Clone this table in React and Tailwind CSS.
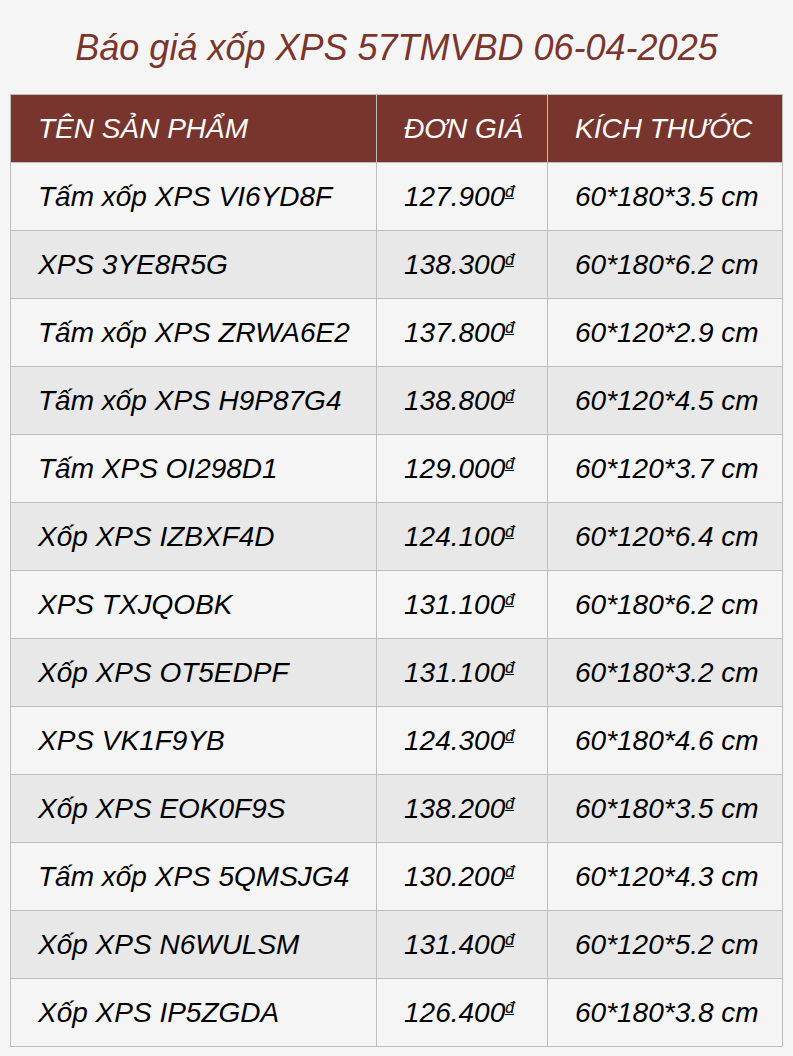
const ROWS = [
  ['Tấm xốp XPS VI6YD8F', '127.900', '60*180*3.5 cm'],
  ['XPS 3YE8R5G', '138.300', '60*180*6.2 cm'],
  ['Tấm xốp XPS ZRWA6E2', '137.800', '60*120*2.9 cm'],
  ['Tấm xốp XPS H9P87G4', '138.800', '60*120*4.5 cm'],
  ['Tấm XPS OI298D1', '129.000', '60*120*3.7 cm'],
  ['Xốp XPS IZBXF4D', '124.100', '60*120*6.4 cm'],
  ['XPS TXJQOBK', '131.100', '60*180*6.2 cm'],
  ['Xốp XPS OT5EDPF', '131.100', '60*180*3.2 cm'],
  ['XPS VK1F9YB', '124.300', '60*180*4.6 cm'],
  ['Xốp XPS EOK0F9S', '138.200', '60*180*3.5 cm'],
  ['Tấm xốp XPS 5QMSJG4', '130.200', '60*120*4.3 cm'],
  ['Xốp XPS N6WULSM', '131.400', '60*120*5.2 cm'],
  ['Xốp XPS IP5ZGDA', '126.400', '60*180*3.8 cm'],
]

export default function App() {
  return (
    <div className="min-h-[1056px] bg-[#f5f5f5] px-[10px] pt-[28px] italic font-['Liberation_Sans',Arial,sans-serif]">
      <h1 className="text-center text-[36px] leading-[40px] text-[#7a352c] mb-[26px]">
        Báo giá xốp XPS 57TMVBD 06-04-2025
      </h1>
      <table className="w-[773px] border-collapse text-[28px] leading-[32px]">
        <thead>
          <tr className="bg-[#78352d] text-white h-[68px]">
            <th className="w-[366px] border border-[#bdbdbd] pl-[27px] text-left font-normal">TÊN SẢN PHẨM</th>
            <th className="w-[171px] border border-[#bdbdbd] pl-[27px] text-left font-normal">ĐƠN GIÁ</th>
            <th className="border border-[#bdbdbd] pl-[27px] text-left font-normal">KÍCH THƯỚC</th>
          </tr>
        </thead>
        <tbody>
          {ROWS.map((r, i) => (
            <tr key={i} className={`h-[68px] text-black ${i % 2 ? 'bg-[#e8e8e8]' : 'bg-[#f5f5f5]'}`}>
              <td className="border border-[#bdbdbd] pl-[27px]">{r[0]}</td>
              <td className="border border-[#bdbdbd] pl-[27px] whitespace-nowrap">
                {r[1]}
                <span className="relative -top-[9px] text-[16px] leading-none underline">đ</span>
              </td>
              <td className="border border-[#bdbdbd] pl-[27px]">{r[2]}</td>
            </tr>
          ))}
        </tbody>
      </table>
    </div>
  )
}
